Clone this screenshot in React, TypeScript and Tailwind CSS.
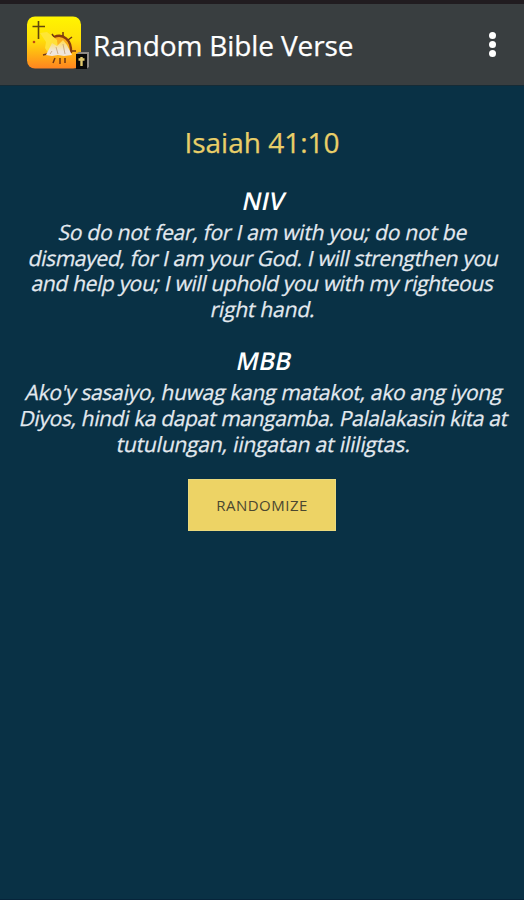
import React from 'react';

function AppIcon() {
  return (
    <svg width="66" height="58" viewBox="0 0 66 58" className="shrink-0">
      <defs>
        <linearGradient id="sun" x1="0" y1="0" x2="0" y2="1">
          <stop offset="0" stopColor="#fff500" />
          <stop offset="0.45" stopColor="#ffdf08" />
          <stop offset="1" stopColor="#ff8420" />
        </linearGradient>
        <linearGradient id="page" x1="0" y1="0" x2="0" y2="1">
          <stop offset="0" stopColor="#ffdc50" />
          <stop offset="0.7" stopColor="#f0e6dc" />
        </linearGradient>
      </defs>
      <rect x="2" y="0.5" width="54" height="52" rx="8" fill="url(#sun)" />
      <path d="M13.500 5v18M7.500 10.500h12.500" stroke="#62460b" strokeWidth="1.600" fill="none" />
      <circle cx="9" cy="26" r="1.300" fill="#c04b13" />
      <circle cx="35" cy="31" r="11" fill="#fbb01c" />
      <path d="M29 21C38 17 47 24 46 37" stroke="#8a3c0c" strokeWidth="2.400" fill="none" />
      <path d="M29 21l-2-3M38 20v-4M43 24l4-3M47 35h4M22 38l-4 1M30 42l-2 5M35 42v6M40 42v5" stroke="#713815" strokeWidth="1.500" fill="none" />
      <path d="M15 17l7-1 10 8 1 9-9 5-4-6 1-6z" fill="#ffe53c" opacity="0.9" />
      <path d="M21 39l6-12 5 3 6-6 4 5 5 10-8 1-6-1-6 1z" fill="url(#page)" />
      <path d="M31 31l2 7M38 28l2 10M27 35l-2 3" stroke="#c9a77c" strokeWidth="0.9" fill="none" />
      <path d="M51 38l3-2h10v15l-3 2z" fill="#8f8a86" />
      <path d="M51 38h11v15H51z" fill="#090909" />
      <path d="M56.500 41v9M53.500 43.500h6" stroke="#e0c86c" strokeWidth="2.400" />
    </svg>
  );
}

function Verse({ name, lines }: { name: string; lines: { text: string; tracking: string }[] }) {
  return (
    <section className="flex flex-col items-center">
      <h3 className="h-[34px] -skew-x-12 text-[24.500px] leading-[34px] font-semibold text-white">{name}</h3>
      <p className="flex flex-col items-center pt-[2px] text-[21px] leading-[25.600px] text-[#e3e9ef]">
        {lines.map(({ text, tracking }) => (
          <span key={text} className={`-skew-x-12 whitespace-nowrap [-webkit-text-stroke:0.25px_#e3e9ef] ${tracking}`}>{text}</span>
        ))}
      </p>
    </section>
  );
}

export default function App() {
  return (
    <div className="flex h-[900px] w-[524px] flex-col overflow-hidden border-b border-[#06243a] bg-[#093145] font-['Open_Sans',sans-serif]">
      <div className="h-1 shrink-0 bg-[#211c20]" />
      <header className="flex h-[82px] shrink-0 items-center border-b border-[#152b36] bg-[#393e40] pl-[25px]">
        <AppIcon />
        <h1 className="ml-[2px] whitespace-nowrap text-[28px] leading-[40px] tracking-[-0.12px] text-white [-webkit-text-stroke:0.25px_white]">Random Bible Verse</h1>
        <div className="mr-[28px] ml-auto flex flex-col gap-[2px]">
          <i className="size-[7px] rounded-full bg-white" />
          <i className="size-[7px] rounded-full bg-white" />
          <i className="size-[7px] rounded-full bg-white" />
        </div>
      </header>
      <main className="flex flex-col items-center">
        <h2 className="mt-[36px] h-[40px] text-[28px] leading-[40px] text-[#e9cf68] [-webkit-text-stroke:0.25px_#e9cf68]">Isaiah 41:10</h2>
        <div className="mt-[22px] pl-[3px]">
          <Verse
            name="NIV"
            lines={[
              { text: 'So do not fear, for I am with you; do not be', tracking: 'tracking-[-0.24px]' },
              { text: 'dismayed, for I am your God. I will strengthen you', tracking: 'tracking-[-0.33px]' },
              { text: 'and help you; I will uphold you with my righteous', tracking: 'tracking-[-0.35px]' },
              { text: 'right hand.', tracking: 'tracking-[-0.2px]' },
            ]}
          />
        </div>
        <div className="mt-[22px] pl-[4px]">
          <Verse
            name="MBB"
            lines={[
              { text: "Ako'y sasaiyo, huwag kang matakot, ako ang iyong", tracking: 'tracking-[-0.29px]' },
              { text: 'Diyos, hindi ka dapat mangamba. Palalakasin kita at', tracking: 'tracking-[-0.35px]' },
              { text: 'tutulungan, iingatan at ililigtas.', tracking: 'tracking-[-0.17px]' },
            ]}
          />
        </div>
        <button className="mt-[22px] h-[52px] w-[148px] border border-[#e9d97d] bg-[#edd365] text-[15px] tracking-[0.5px] text-[#4b4730]">RANDOMIZE</button>
      </main>
    </div>
  );
}
